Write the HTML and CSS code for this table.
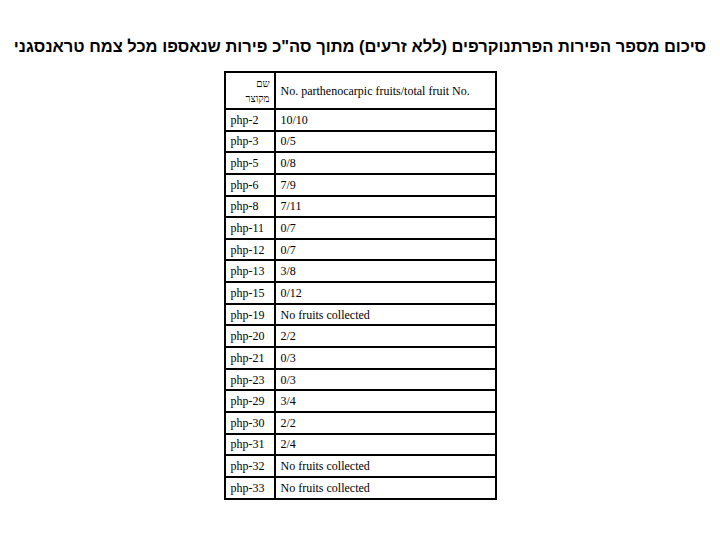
FILE: index.html
```html
<!DOCTYPE html>
<html lang="he">
<head>
<meta charset="utf-8">
<link rel="stylesheet" href="styles.css">
</head>
<body>
<div class="page">
  <h1 class="title" dir="rtl">סיכום מספר הפירות הפרתנוקרפים (ללא זרעים) מתוך סה"כ פירות שנאספו מכל צמח טראנסגני</h1>
  <table class="data">
    <tr class="head">
      <td class="name-h" dir="rtl">שם<br>מקוצר</td>
      <td class="val-h">No. parthenocarpic fruits/total fruit No.</td>
    </tr>
    <tr><td>php-2</td><td>10/10</td></tr>
    <tr><td>php-3</td><td>0/5</td></tr>
    <tr><td>php-5</td><td>0/8</td></tr>
    <tr><td>php-6</td><td>7/9</td></tr>
    <tr><td>php-8</td><td>7/11</td></tr>
    <tr><td>php-11</td><td>0/7</td></tr>
    <tr><td>php-12</td><td>0/7</td></tr>
    <tr><td>php-13</td><td>3/8</td></tr>
    <tr><td>php-15</td><td>0/12</td></tr>
    <tr><td>php-19</td><td>No fruits collected</td></tr>
    <tr><td>php-20</td><td>2/2</td></tr>
    <tr><td>php-21</td><td>0/3</td></tr>
    <tr><td>php-23</td><td>0/3</td></tr>
    <tr><td>php-29</td><td>3/4</td></tr>
    <tr><td>php-30</td><td>2/2</td></tr>
    <tr><td>php-31</td><td>2/4</td></tr>
    <tr><td>php-32</td><td>No fruits collected</td></tr>
    <tr><td>php-33</td><td>No fruits collected</td></tr>
  </table>
</div>
</body>
</html>
```
FILE: styles.css
```css
html, body {
  margin: 0;
  padding: 0;
  background: #ffffff;
}
.page {
  width: 720px;
  height: 540px;
  display: flex;
  flex-direction: column;
  align-items: center;
}
.title {
  margin: 35px 0 0 0;
  width: 720px;
  text-align: center;
  font-family: "Liberation Sans", "DejaVu Sans", sans-serif;
  font-weight: bold;
  font-size: 16.5px;
  line-height: 22px;
  color: #000;
  white-space: nowrap;
}
.data {
  margin-top: 14px;
  border-collapse: collapse;
  width: 273px;
  font-family: "Liberation Serif", serif;
  font-size: 12px;
  color: #000;
}
.data td {
  border: 2px solid #000;
  height: 19.65px;
  padding: 0 5px;
  text-align: left;
  vertical-align: middle;
  line-height: 14px;
}
.data td:first-child {
  width: 38px;
  padding-left: 5px;
}
.data .head td {
  height: 35px;
}
.data .name-h {
  text-align: right;
  font-size: 10px;
  line-height: 15px;
  padding-right: 4px;
}
.data .val-h {
  font-size: 12px;
}
```
